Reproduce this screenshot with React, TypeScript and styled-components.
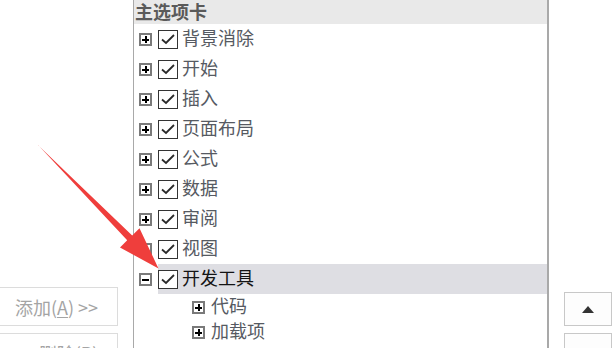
import React from "react";
import styled, { createGlobalStyle } from "styled-components";

const Global = createGlobalStyle`
  html, body { margin: 0; padding: 0; background: #fff; }
  body { width: 614px; height: 348px; overflow: hidden; font-family: "Noto Sans CJK SC", "Noto Sans", sans-serif; }
`;

const Page = styled.div`
  position: relative;
  display: flex;
  width: 614px;
  height: 348px;
  overflow: hidden;
  background: #fff;
`;

const LeftColumn = styled.div`
  width: 133px;
  display: flex;
  flex-direction: column;
  gap: 7px;
  padding-top: 287px;
  box-sizing: border-box;
`;

const SideButton = styled.div<{ $w: number }>`
  width: ${(p) => p.$w}px;
  height: 39px;
  flex: none;
  box-sizing: border-box;
  border: 1px solid #dcdcdc;
  border-left: none;
  background: #fff;
  color: #a4a4a4;
  font-size: 18px;
  display: flex;
  align-items: center;
  justify-content: center;
  padding-right: 4px;
  white-space: pre;
  u { text-decoration: underline; text-underline-offset: 2px; }
`;

const TreePanel = styled.div`
  width: 416px;
  box-sizing: border-box;
  border-left: 1px solid #a9a9a9;
  border-right: 2px solid #a9a9a9;
  display: flex;
  flex-direction: column;
`;

const Header = styled.div`
  height: 24px;
  flex: none;
  background: #e9e9e9;
  color: #5a5a5a;
  font-weight: 700;
  font-size: 18px;
  line-height: 22px;
  padding-left: 1px;
`;

const Row = styled.div<{ $indent: number; $h: number }>`
  height: ${(p) => p.$h}px;
  flex: none;
  display: flex;
  align-items: center;
  padding-left: ${(p) => p.$indent}px;
`;

const Expander = styled.div`
  width: 13px;
  height: 13px;
  flex: none;
  box-sizing: border-box;
  border: 2px solid #7a7a7a;
  background: #fff;
  margin-right: 6px;
  display: flex;
  align-items: center;
  justify-content: center;
`;

const ItemBody = styled.div<{ $selected?: boolean }>`
  flex: 1;
  align-self: stretch;
  display: flex;
  align-items: center;
  background: ${(p) => (p.$selected ? "#dedee3" : "transparent")};
`;

const CheckBox = styled.div`
  width: 20px;
  height: 19px;
  flex: none;
  box-sizing: border-box;
  border: 1px solid #333;
  background: #fff;
  margin-right: 4px;
  display: flex;
  align-items: center;
  justify-content: center;
`;

const Label = styled.span<{ $dark?: boolean }>`
  font-size: 18px;
  line-height: 1;
  color: ${(p) => (p.$dark ? "#141414" : "#565a62")};
  margin-top: -4px;
`;

const RightColumn = styled.div`
  flex: 1;
  display: flex;
  flex-direction: column;
  gap: 7px;
  padding: 292px 0 0 15px;
  box-sizing: border-box;
`;

const MoveButton = styled.div`
  width: 48px;
  height: 34px;
  flex: none;
  box-sizing: border-box;
  border: 1px solid #c8c8c8;
  background: #fdfdfd;
  display: flex;
  align-items: center;
  justify-content: center;
`;

const Overlay = styled.svg`
  position: absolute;
  left: 0;
  top: 0;
  pointer-events: none;
`;

const Plus = ({ minus }: { minus?: boolean }) => (
  <svg width="9" height="9" viewBox="0 0 9 9" shapeRendering="crispEdges">
    <rect x="1" y="3.5" width="7" height="2" fill="#000" />
    {!minus && <rect x="3.5" y="1" width="2" height="7" fill="#000" />}
  </svg>
);

const Check = () => (
  <svg width="16" height="14" viewBox="0 0 16 14">
    <path d="M2 7.5 L6 11 L14 3" fill="none" stroke="#2a2a2a" strokeWidth="1.8" />
  </svg>
);

const items = ["背景消除", "开始", "插入", "页面布局", "公式", "数据", "审阅", "视图"];

export default function App() {
  return (
    <>
      <Global />
      <Page>
        <LeftColumn>
          <SideButton $w={118}>
            添加(<u>A</u>) &gt;&gt;
          </SideButton>
          <SideButton $w={118}>
            &lt;&lt; 删除(<u>R</u>)
          </SideButton>
        </LeftColumn>
        <TreePanel>
          <Header>主选项卡</Header>
          {items.map((t) => (
            <Row key={t} $indent={5} $h={30}>
              <Expander>
                <Plus />
              </Expander>
              <ItemBody>
                <CheckBox>
                  <Check />
                </CheckBox>
                <Label>{t}</Label>
              </ItemBody>
            </Row>
          ))}
          <Row $indent={5} $h={30}>
            <Expander>
              <Plus minus />
            </Expander>
            <ItemBody $selected>
              <CheckBox>
                <Check />
              </CheckBox>
              <Label $dark>开发工具</Label>
            </ItemBody>
          </Row>
          <Row $indent={58} $h={26}>
            <Expander>
              <Plus />
            </Expander>
            <Label>代码</Label>
          </Row>
          <Row $indent={58} $h={24}>
            <Expander>
              <Plus />
            </Expander>
            <Label>加载项</Label>
          </Row>
        </TreePanel>
        <RightColumn>
          <MoveButton>
            <svg width="12" height="7" viewBox="0 0 12 7">
              <path d="M6 0 L12 7 L0 7 Z" fill="#333" />
            </svg>
          </MoveButton>
          <MoveButton />
        </RightColumn>
        <Overlay width="614" height="348" viewBox="0 0 614 348">
          <polygon
            points="37.6,144.6 38.4,145.4 132.2,235.5 139.5,228.3 158.5,268.5 120,247.5 127.2,240.3"
            fill="#ef3e3c"
          />
        </Overlay>
      </Page>
    </>
  );
}
